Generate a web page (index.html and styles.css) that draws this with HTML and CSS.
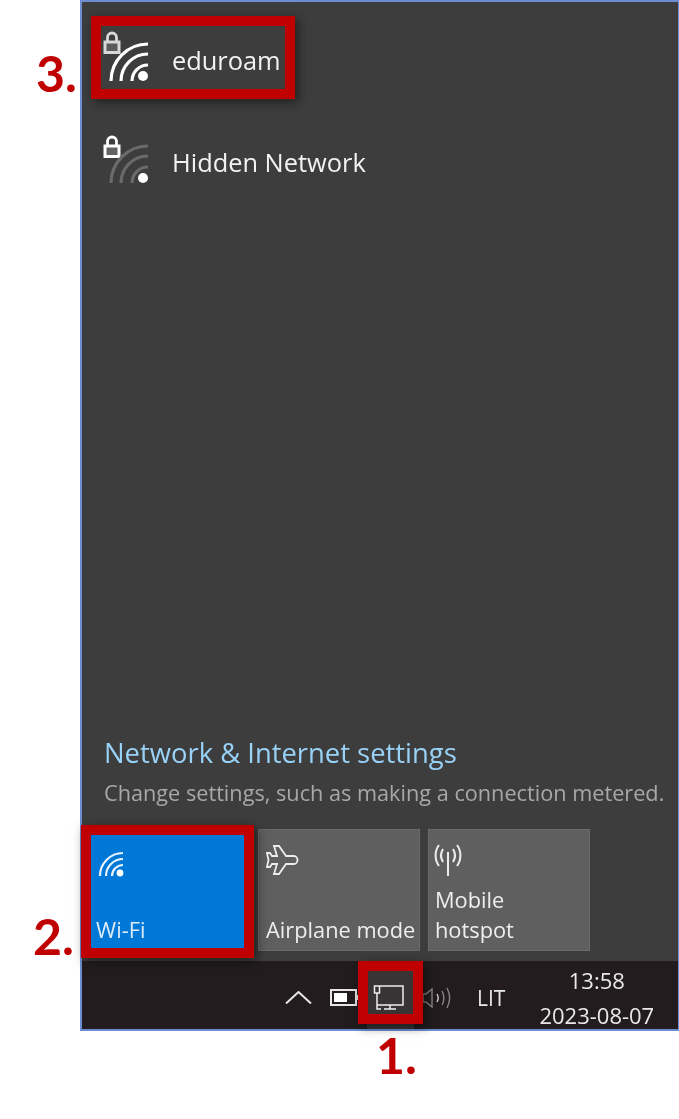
FILE: index.html
```html
<!DOCTYPE html>
<html lang="en">
<head>
    <meta charset="UTF-8">
    <meta name="viewport" content="width=device-width, initial-scale=1.0">
    <title>Connect to eduroam</title>
    <link rel="stylesheet" href="styles.css">
</head>
<body>
    <svg class="defs" width="0" height="0">
        <symbol id="lock" viewBox="0 0 18 24">
            <path d="M4.5 11V6.500a4.500 4.500 0 0 1 9 0V11" fill="none" stroke="currentColor" stroke-width="2.800"/>
            <rect x="2" y="11" width="14" height="10.500" fill="currentColor" fill-opacity="0.2" stroke="currentColor" stroke-width="3"/>
        </symbol>
    </svg>

    <div class="page">
        <div class="panel">
            <div class="flyout">
                <div class="networks">
                    <div class="network">
                        <svg class="net-icon" width="58" height="60" viewBox="0 0 58 60">
                            <use href="#lock" x="3" y="0" width="18" height="24" class="lock-dim"/>
                            <g fill="none" stroke="#fff" stroke-width="3.200">
                                <path d="M11 50A37 37 0 0 1 48 13"/>
                                <path d="M21 50A27 27 0 0 1 48 23"/>
                                <path d="M32 50A16 16 0 0 1 48 34"/>
                            </g>
                            <circle cx="43" cy="45" r="5" fill="#fff"/>
                        </svg>
                        <span class="net-name">eduroam</span>
                    </div>
                    <div class="network">
                        <svg class="net-icon" width="58" height="60" viewBox="0 0 58 60">
                            <use href="#lock" x="3" y="2" width="18" height="24" class="lock"/>
                            <g fill="none" stroke="#6a6a6a" stroke-width="3.200">
                                <path d="M11 50A37 37 0 0 1 48 13"/>
                                <path d="M21 50A27 27 0 0 1 48 23"/>
                                <path d="M32 50A16 16 0 0 1 48 34"/>
                            </g>
                            <circle cx="43" cy="45" r="5" fill="#fff"/>
                        </svg>
                        <span class="net-name">Hidden Network</span>
                    </div>
                </div>

                <div class="settings">
                    <a class="settings-link">Network &amp; Internet settings</a>
                    <p class="settings-hint">Change settings, such as making a connection metered.</p>
                </div>

                <div class="actions">
                    <div class="tile tile-on">
                        <svg class="tile-wifi" width="30" height="30" viewBox="0 0 30 30">
                            <g fill="none" stroke="#e8f2fb" stroke-width="2.200">
                                <path d="M3 25A23 23 0 0 1 26 2"/>
                                <path d="M9 25A17 17 0 0 1 26 8"/>
                                <path d="M15 25A11 11 0 0 1 26 14"/>
                            </g>
                            <circle cx="23" cy="22" r="3.400" fill="#fff"/>
                        </svg>
                        <span>Wi-Fi</span>
                    </div>
                    <div class="tile">
                        <svg width="33" height="32" viewBox="0 0 33 32">
                            <path d="M20 11L13 1H8L11 11H6L4 8H1L2.500 15L1 22H4L6 19H11L8 29H13L20 19H28C30 19 31.500 17 31.500 15C31.500 13 30 11 28 11Z" fill="none" stroke="#eee" stroke-width="1.800"/>
                        </svg>
                        <span>Airplane mode</span>
                    </div>
                    <div class="tile tile-mobile">
                        <svg class="tile-hotspot" width="32" height="32" viewBox="0 0 32 32">
                            <g fill="none" stroke="#eee" stroke-width="2">
                                <path d="M15 8V32"/>
                                <path d="M10 5C7.500 9 7.500 14 10 18"/>
                                <path d="M20 5C22.500 9 22.500 14 20 18"/>
                                <path d="M6 1C1.500 7 1.500 16 6 22"/>
                                <path d="M24 1C28.500 7 28.500 16 24 22"/>
                            </g>
                        </svg>
                        <span>Mobile<br>hotspot</span>
                    </div>
                </div>
            </div>

            <div class="taskbar">
                <svg class="tray-up" width="27" height="13" viewBox="0 0 27 13">
                    <path d="M1 12.500L13.500 1L26 12.500" fill="none" stroke="#e6e6e6" stroke-width="2"/>
                </svg>
                <svg class="tray-battery" width="30" height="18" viewBox="0 0 30 18">
                    <rect x="1" y="1" width="25" height="15" fill="none" stroke="#e6e6e6" stroke-width="2"/>
                    <rect x="4" y="4" width="13" height="9" fill="#fff"/>
                    <rect x="27" y="6" width="2" height="5" fill="#e6e6e6"/>
                </svg>
                <div class="tray-active">
                    <svg width="32" height="26" viewBox="0 0 32 26">
                        <g fill="none" stroke="#eee" stroke-width="1.500">
                            <path d="M7 1H30V20H4"/>
                            <rect x="1.500" y="1" width="5" height="7"/>
                            <path d="M4 8V24H8"/>
                            <path d="M17 20V24M11 24H23"/>
                        </g>
                    </svg>
                </div>
                <svg class="tray-sound" width="29" height="24" viewBox="0 0 29 24">
                    <g fill="none" stroke="#8a8688" stroke-width="1.400">
                        <path d="M1 8V16H4L10 21V3L4 8Z"/>
                        <path d="M15 8C16.500 10.500 16.500 13.500 15 16" stroke="#cfcfcf"/>
                        <path d="M20 5C22.500 9 22.500 15 20 19"/>
                        <path d="M25 2C28.500 8 28.500 16 25 22"/>
                    </g>
                </svg>
                <span class="tray-lang">LIT</span>
                <div class="clock">
                    <span>13:58</span>
                    <span>2023-08-07</span>
                </div>
            </div>
        </div>

        <div class="mark mark-network"></div>
        <div class="mark mark-wifi"></div>
        <div class="mark mark-tray"></div>
        <span class="step step-network">3.</span>
        <span class="step step-wifi">2.</span>
        <span class="step step-tray">1.</span>
    </div>
</body>
</html>
```

FILE: styles.css
```css
body {
    margin: 0;
    background-color: #fff;
    font-family: "Open Sans", "Noto Sans", sans-serif;
}
.defs {
    display: block;
}
.page {
    position: relative;
    height: 1119px;
    overflow: hidden;
    padding-left: 80px;
}
.panel {
    display: flex;
    flex-direction: column;
    width: 596px;
    height: 1027px;
    border: 2px solid #6c8ed0;
    background-color: #3d3d3d;
    filter: blur(0.4px);
}
.flyout {
    flex: 1;
    display: flex;
    flex-direction: column;
    padding: 0 0 10px 6px;
}

/* network list */
.networks {
    flex: 1;
    padding-top: 7px;
}
.network {
    display: flex;
    align-items: center;
    height: 102px;
    gap: 14px;
    padding-left: 12px;
}
.net-icon {
    margin-top: 2px;
}
.lock {
    color: #fff;
}
.lock-dim {
    color: #d8d8d8;
}
.net-name {
    font-size: 25.400px;
    color: #f2f2f2;
}

.settings {
    padding-left: 16px;
    margin-bottom: 20px;
}
.settings-link {
    display: block;
    font-size: 27.400px;
    line-height: 36px;
    color: #99d2f7;
}
.settings-hint {
    margin: 6px 0 0;
    font-size: 21.700px;
    line-height: 32px;
    color: #a8a8a8;
    white-space: nowrap;
}

/* quick actions */
.actions {
    display: flex;
    gap: 8px;
}
.tile {
    display: flex;
    flex-direction: column;
    justify-content: space-between;
    width: 162px;
    height: 122px;
    box-sizing: border-box;
    padding: 15px 6px 5px 7px;
    background-color: #5f5f5f;
    border: 1px solid #6b6b6b;
    font-size: 21.800px;
    line-height: 30px;
    color: #eee;
    white-space: nowrap;
}
.tile-on {
    background-color: #0078d7;
    border-color: #0078d7;
    color: #dcebf8;
}
.tile-mobile {
    padding-left: 6px;
}
.tile-wifi {
    margin: 6px 0 0 1px;
}
.tile-hotspot {
    margin: -1px 0 0 -2px;
}

/* taskbar */
.taskbar {
    display: flex;
    align-items: center;
    height: 68px;
    padding-left: 203px;
    background-color: #221c1f;
    color: #e8e8e8;
}
.taskbar > * {
    margin-top: 5px;
}
.tray-battery {
    margin-left: 18px;
}
.taskbar .tray-active {
    display: flex;
    align-items: center;
    align-self: stretch;
    margin: 0 0 0 7px;
    padding: 5px 9px 0 6px;
    background-color: #383335;
}
.tray-sound {
    margin-left: 8px;
}
.tray-lang {
    margin-left: 26px;
    font-size: 21px;
}
.clock {
    display: flex;
    flex-direction: column;
    align-items: center;
    gap: 7px;
    margin-left: 34px;
    font-size: 22px;
    line-height: 28px;
}

/* annotations drawn over the screenshot */
.mark {
    position: absolute;
    box-sizing: border-box;
    border: 10px solid #c00000;
    box-shadow: 3px 3px 10px rgba(0, 0, 0, 0.5);
}
.mark-network {
    left: 91px;
    top: 16px;
    width: 204px;
    height: 83px;
}
.mark-wifi {
    left: 81px;
    top: 825px;
    width: 173px;
    height: 133px;
}
.mark-tray {
    left: 358px;
    top: 961px;
    width: 65px;
    height: 63px;
}
.step {
    position: absolute;
    font-family: Lato, "Open Sans", sans-serif;
    font-weight: 700;
    font-size: 50px;
    line-height: 48px;
    color: #c00000;
}
.step-network {
    left: 36px;
    top: 49px;
}
.step-wifi {
    left: 33px;
    top: 912px;
}
.step-tray {
    left: 376px;
    top: 1031px;
}
```
